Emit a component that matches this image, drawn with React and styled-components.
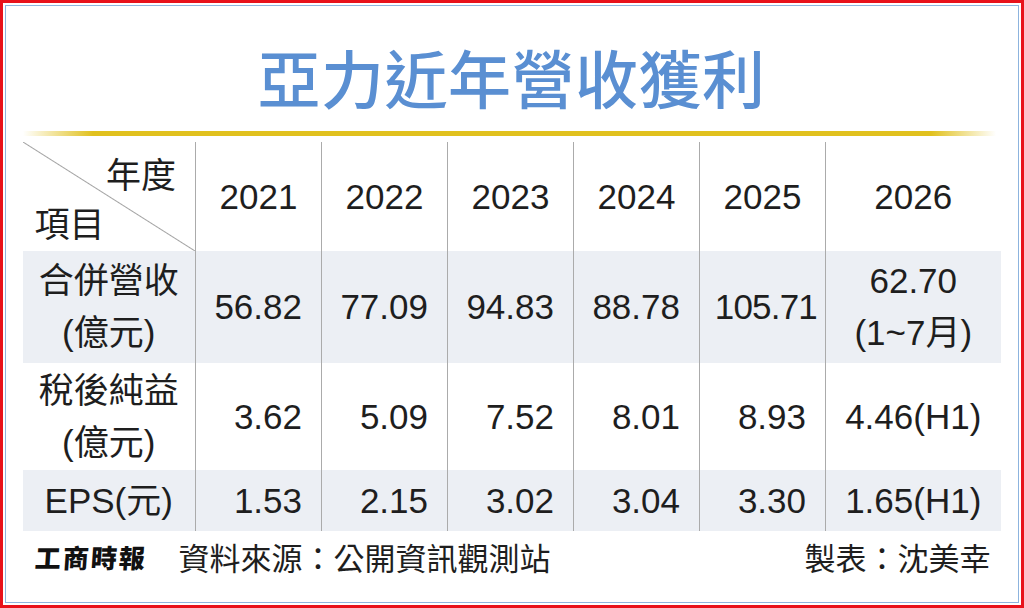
import React from 'react';
import styled, { createGlobalStyle } from 'styled-components';

const GlobalStyle = createGlobalStyle`
  html, body {
    margin: 0;
    padding: 0;
    background: #ffffff;
  }
  * {
    box-sizing: border-box;
  }
`;

const years = ['2021', '2022', '2023', '2024', '2025', '2026'];

const filas = [
  {
    etiqueta: ['合併營收', '(億元)'],
    valores: ['56.82', '77.09', '94.83', '88.78', '105.71'],
    ultimo: ['62.70', '(1~7月)'],
    gris: true,
    alto: 112,
  },
  {
    etiqueta: ['稅後純益', '(億元)'],
    valores: ['3.62', '5.09', '7.52', '8.01', '8.93'],
    ultimo: ['4.46(H1)'],
    gris: false,
    alto: 107,
  },
  {
    etiqueta: ['EPS(元)'],
    valores: ['1.53', '2.15', '3.02', '3.04', '3.30'],
    ultimo: ['1.65(H1)'],
    gris: true,
    alto: 61,
  },
];

export default function App() {
  return (
    <>
      <GlobalStyle />
      <Marco>
        <Cuadro>
          <Titulo>亞力近年營收獲利</Titulo>
          <LineaDorada />
          <Tabla>
            <colgroup>
              <col style={{ width: 173 }} />
              <col style={{ width: 126 }} />
              <col style={{ width: 126 }} />
              <col style={{ width: 126 }} />
              <col style={{ width: 126 }} />
              <col style={{ width: 126 }} />
              <col />
            </colgroup>
            <thead>
              <Fila $alto={109}>
                <Esquina>
                  <EsquinaInner>
                    <EsquinaTexto $lado="end">年度</EsquinaTexto>
                    <EsquinaTexto $lado="start">項目</EsquinaTexto>
                  </EsquinaInner>
                </Esquina>
                {years.map((y) => (
                  <Anio key={y}>{y}</Anio>
                ))}
              </Fila>
            </thead>
            <tbody>
              {filas.map((f, i) => (
                <Fila key={i} $alto={f.alto} $gris={f.gris}>
                  <Etiqueta>
                    {f.etiqueta.map((t) => (
                      <Linea key={t}>{t}</Linea>
                    ))}
                  </Etiqueta>
                  {f.valores.map((v, j) => (
                    <Valor key={j} $compacto={v.length > 5}>{v}</Valor>
                  ))}
                  <ValorCentro>
                    {f.ultimo.map((t) => (
                      <Linea key={t}>{t}</Linea>
                    ))}
                  </ValorCentro>
                </Fila>
              ))}
            </tbody>
          </Tabla>
          <Pie>
            <Logo>工商時報</Logo>
            <Fuente>資料來源：公開資訊觀測站</Fuente>
            <Autor>製表：沈美幸</Autor>
          </Pie>
        </Cuadro>
      </Marco>
    </>
  );
}

const Marco = styled.div`
  width: 1024px;
  height: 608px;
  border: 3px solid #e8121b;
  padding: 2px;
  background: #ffffff;
  font-family: 'Liberation Sans', 'Noto Sans CJK TC', sans-serif;
  color: #1e1e1e;
`;

const Cuadro = styled.div`
  height: 100%;
  border: 1.5px solid #8db4de;
  padding: 0 17.5px 0 16.5px;
  display: flex;
  flex-direction: column;
`;

const Titulo = styled.div`
  height: 125px;
  padding-top: 13px;
  display: flex;
  align-items: center;
  justify-content: center;
  font-family: 'Noto Sans CJK TC', sans-serif;
  font-weight: 500;
  font-size: 63px;
  line-height: 1;
  color: #5a8fd2;
  letter-spacing: 0.5px;
`;

const LineaDorada = styled.div`
  height: 5px;
  margin-bottom: 6px;
  background: linear-gradient(
    to right,
    rgba(226, 194, 30, 0) 0,
    #e1c11e 70px,
    #e1c11e calc(100% - 70px),
    rgba(226, 194, 30, 0) calc(100% - 5px)
  );
`;

const Tabla = styled.table`
  width: 100%;
  table-layout: fixed;
  border-collapse: collapse;
  font-size: 35px;
`;

const Fila = styled.tr`
  height: ${(p) => p.$alto}px;
  background: ${(p) => (p.$gris ? '#eceff4' : '#ffffff')};
`;

const Celda = styled.td`
  padding: 0;
  vertical-align: middle;
  border-left: 1.5px solid #ababab;
  line-height: 52px;

  &:first-child {
    border-left: none;
  }
`;

const Esquina = styled.th`
  padding: 0;
  font-weight: 400;
  background: linear-gradient(
    to top right,
    transparent calc(50% - 1px),
    #a3a3a3 50%,
    transparent calc(50% + 1px)
  );
`;

const EsquinaInner = styled.div`
  height: 109px;
  padding: 11px 19px 9px 12px;
  display: flex;
  flex-direction: column;
  justify-content: space-between;
  font-family: 'Noto Sans CJK TC', sans-serif;
`;

const EsquinaTexto = styled.span`
  align-self: ${(p) => (p.$lado === 'end' ? 'flex-end' : 'flex-start')};
  line-height: 40px;
`;

const Anio = styled(Celda).attrs({ as: 'th' })`
  font-weight: 400;
  text-align: center;
`;

const Etiqueta = styled(Celda)`
  text-align: center;
`;

const Valor = styled(Celda)`
  text-align: right;
  padding-right: ${(p) => (p.$compacto ? '8px' : '19px')};
  letter-spacing: ${(p) => (p.$compacto ? '-0.8px' : '0')};
`;

const ValorCentro = styled(Celda)`
  text-align: center;
`;

const Linea = styled.div`
  white-space: nowrap;
`;

const Pie = styled.div`
  height: 50px;
  display: flex;
  align-items: center;
  padding: 0 10px 0 12px;
  font-family: 'Noto Sans CJK TC', sans-serif;
  font-size: 31px;
`;

const Logo = styled.span`
  font-weight: 900;
  font-size: 26px;
  letter-spacing: 2px;
  color: #111111;
  margin-right: 32px;
  transform: skewX(-4deg);
`;

const Fuente = styled.span`
  flex: 1;
`;

const Autor = styled.span``;
